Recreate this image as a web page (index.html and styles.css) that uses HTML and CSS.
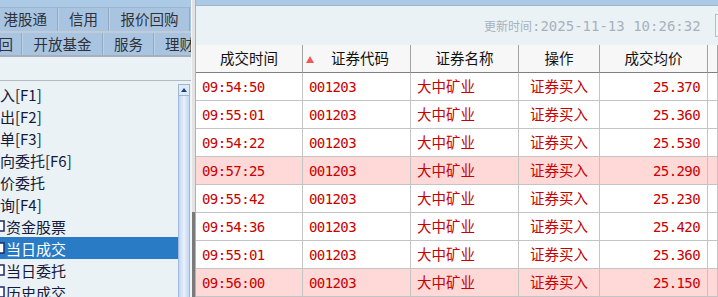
FILE: index.html
```html
<!DOCTYPE html>
<html lang="zh-CN">
<head>
    <meta charset="UTF-8">
    <title>当日成交</title>
    <link rel="stylesheet" href="styles.css">
</head>
<body>

    <!-- 左侧功能树 -->
    <aside class="side">
        <div class="side-band"></div>
        <div class="tabs tabs-top">
            <div class="tab tab-cut">港股通</div>
            <div class="tab">信用</div>
            <div class="tab">报价回购</div>
        </div>
        <div class="tabs tabs-bottom">
            <div class="tab tab-cut">回</div>
            <div class="tab">开放基金</div>
            <div class="tab">服务</div>
            <div class="tab">理财</div>
        </div>
        <div class="side-blank"></div>

        <div class="tree-wrap">
            <ul class="tree">
                <li class="tree-item">入[F1]</li>
                <li class="tree-item">出[F2]</li>
                <li class="tree-item">单[F3]</li>
                <li class="tree-item">向委托[F6]</li>
                <li class="tree-item">价委托</li>
                <li class="tree-item">询[F4]</li>
                <li class="tree-item leaf"><svg class="doc" width="5" height="12" viewBox="0 0 5 12"><rect x="-6" y="1" width="10" height="10" fill="#fff" stroke="#1c2a6b" stroke-width="1.5"/></svg>资金股票</li>
                <li class="tree-item leaf selected"><svg class="doc" width="5" height="12" viewBox="0 0 5 12"><rect x="-6" y="1" width="10" height="10" fill="#fff" stroke="#1c2a6b" stroke-width="1.5"/></svg>当日成交</li>
                <li class="tree-item leaf"><svg class="doc" width="5" height="12" viewBox="0 0 5 12"><rect x="-6" y="1" width="10" height="10" fill="#fff" stroke="#1c2a6b" stroke-width="1.5"/></svg>当日委托</li>
                <li class="tree-item leaf"><svg class="doc" width="5" height="12" viewBox="0 0 5 12"><rect x="-6" y="1" width="10" height="10" fill="#fff" stroke="#1c2a6b" stroke-width="1.5"/></svg>历史成交</li>
            </ul>
            <div class="scrollbar">
                <div class="scroll-up"></div>
                <div class="scroll-track"></div>
            </div>
        </div>
    </aside>

    <div class="splitter">
        <div class="splitter-grip"></div>
    </div>

    <!-- 右侧成交列表 -->
    <main class="main">
        <div class="main-band"></div>
        <div class="status">
            <span class="status-text"><span class="status-label">更新时间</span><span class="mono">:2025-11-13 10:26:32</span></span>
            <div class="status-box"></div>
        </div>

        <table class="grid">
            <colgroup>
                <col class="c-time">
                <col class="c-code">
                <col class="c-name">
                <col class="c-op">
                <col class="c-price">
                <col>
            </colgroup>
            <thead>
                <tr>
                    <th>成交时间</th>
                    <th class="sorted"><span class="sort-mark"></span>证券代码</th>
                    <th>证券名称</th>
                    <th>操作</th>
                    <th>成交均价</th>
                    <th></th>
                </tr>
            </thead>
            <tbody>
                <tr>
                    <td class="mono">09:54:50</td><td class="mono">001203</td><td>大中矿业</td><td class="op">证券买入</td><td class="mono price">25.370</td><td></td>
                </tr>
                <tr>
                    <td class="mono">09:55:01</td><td class="mono">001203</td><td>大中矿业</td><td class="op">证券买入</td><td class="mono price">25.360</td><td></td>
                </tr>
                <tr>
                    <td class="mono">09:54:22</td><td class="mono">001203</td><td>大中矿业</td><td class="op">证券买入</td><td class="mono price">25.530</td><td></td>
                </tr>
                <tr class="hot">
                    <td class="mono">09:57:25</td><td class="mono">001203</td><td>大中矿业</td><td class="op">证券买入</td><td class="mono price">25.290</td><td></td>
                </tr>
                <tr>
                    <td class="mono">09:55:42</td><td class="mono">001203</td><td>大中矿业</td><td class="op">证券买入</td><td class="mono price">25.230</td><td></td>
                </tr>
                <tr>
                    <td class="mono">09:54:36</td><td class="mono">001203</td><td>大中矿业</td><td class="op">证券买入</td><td class="mono price">25.420</td><td></td>
                </tr>
                <tr>
                    <td class="mono">09:55:01</td><td class="mono">001203</td><td>大中矿业</td><td class="op">证券买入</td><td class="mono price">25.360</td><td></td>
                </tr>
                <tr class="hot">
                    <td class="mono">09:56:00</td><td class="mono">001203</td><td>大中矿业</td><td class="op">证券买入</td><td class="mono price">25.150</td><td></td>
                </tr>
            </tbody>
        </table>
    </main>

</body>
</html>
```

FILE: styles.css
```css
* {
    box-sizing: border-box;
}

body {
    margin: 0;
    width: 718px;
    height: 297px;
    overflow: hidden;
    display: flex;
    font-family: "Noto Sans CJK SC", sans-serif;
    background-color: #ebf2f6;
}

.mono {
    font-family: "DejaVu Sans Mono", "Liberation Mono", monospace;
}

/* 左侧 */
.side {
    width: 191px;
    flex-shrink: 0;
    display: flex;
    flex-direction: column;
    overflow: hidden;
    background-color: #ebf2f6;
}

.side-band {
    height: 8px;
    flex-shrink: 0;
    background-color: #acc9e5;
    border-bottom: 1px solid #9cb6d0;
}

.tabs {
    display: grid;
    height: 24px;
    flex-shrink: 0;
    background-color: #a9c4e0;
    border-bottom: 2px solid #c3ccd6;
}

.tabs-top {
    grid-template-columns: 58px 51px 81px;
    height: 25px;
}

.tabs-bottom {
    grid-template-columns: 22px 81px 51px 51px;
    border-bottom-color: #a7b0ba;
}

.tab {
    display: flex;
    align-items: center;
    justify-content: center;
    font-size: 14.5px;
    line-height: 1;
    color: #2e3238;
    white-space: nowrap;
    overflow: hidden;
    border-right: 1px solid #93aac3;
    border-left: 1px solid #bcd0e6;
}

.tab-cut {
    justify-content: flex-end;
    padding-right: 10px;
    border-left: none;
}

.tabs-bottom .tab-cut {
    padding-right: 8px;
}

.side-blank {
    height: 24px;
    flex-shrink: 0;
    border-bottom: 1px solid #b2bac3;
}

.tree-wrap {
    flex: 1;
    min-height: 0;
    display: flex;
}

.tree {
    width: 178px;
    margin: 0;
    padding: 2px 0 0;
    list-style: none;
    overflow: hidden;
}

.tree-item {
    height: 22px;
    display: flex;
    align-items: center;
    font-size: 15px;
    line-height: 1;
    color: #15193a;
    white-space: nowrap;
}

.doc {
    margin-right: 1px;
    flex-shrink: 0;
}

.tree-item.selected {
    background-color: #2a7bc6;
    color: #ffffff;
}

.scrollbar {
    width: 12px;
    margin-top: 3px;
    display: flex;
    flex-direction: column;
}

.scroll-up {
    height: 12px;
    flex-shrink: 0;
    position: relative;
    background-color: #dfeaf7;
    border: 1px solid #9db4d3;
}

.scroll-up::after {
    content: "";
    position: absolute;
    left: 2px;
    top: 3px;
    border-left: 3px solid transparent;
    border-right: 3px solid transparent;
    border-bottom: 4px solid #1f3f86;
}

.scroll-track {
    flex: 1;
    background: linear-gradient(to right, #c3d6f0, #e9f1fb 50%, #c3d6f0);
    border-left: 1px solid #a2badb;
    border-right: 1px solid #a2badb;
}

/* 分隔条 */
.splitter {
    width: 4px;
    flex-shrink: 0;
    display: flex;
    flex-direction: column;
    background-color: #e3e3e3;
    border-left: 1px solid #f7f7f7;
}

.splitter-grip {
    margin-top: 212px;
    flex: 1;
    background-color: #7a7a7a;
}

/* 右侧 */
.main {
    flex: 1;
    display: flex;
    flex-direction: column;
    overflow: hidden;
    border-left: 1px solid #a9b3bd;
}

.main-band {
    height: 6px;
    flex-shrink: 0;
    background-color: #acc9e5;
    border-bottom: 1px solid #9cb6d0;
}

.status {
    height: 39px;
    flex-shrink: 0;
    display: flex;
    align-items: center;
    padding-left: 288px;
    white-space: nowrap;
}

.status-text {
    color: #a8b1bb;
    font-size: 14px;
    line-height: 1;
}

.status-label {
    font-size: 12px;
}

.status-box {
    width: 40px;
    height: 23px;
    margin-left: 14px;
    flex-shrink: 0;
    border: 1px solid #b4bdc6;
    background-color: #f2f6f9;
}

.grid {
    width: 100%;
    flex-shrink: 0;
    table-layout: fixed;
    border-collapse: separate;
    border-spacing: 0;
}

.c-time { width: 107px; }
.c-code { width: 108px; }
.c-name { width: 108px; }
.c-op { width: 81px; }
.c-price { width: 108px; }

.grid th {
    height: 28px;
    padding: 0;
    font-size: 14.5px;
    font-weight: normal;
    line-height: 1;
    color: #111111;
    background-color: #f7f7f7;
    border-right: 1px solid #a3a3a3;
    border-bottom: 1px solid #808080;
    white-space: nowrap;
}

.grid th.sorted {
    position: relative;
    padding-left: 7px;
}

.sort-mark {
    position: absolute;
    left: 3px;
    top: 11px;
    border-left: 4px solid transparent;
    border-right: 4px solid transparent;
    border-bottom: 7px solid #f25757;
}

.grid td {
    height: 28px;
    padding: 0 6px;
    font-size: 14.5px;
    line-height: 1;
    color: #c80000;
    background-color: #ffffff;
    border-right: 1px solid #c4c4c4;
    border-bottom: 1px solid #c4c4c4;
    white-space: nowrap;
    overflow: hidden;
}

.grid td.mono {
    font-size: 14px;
    letter-spacing: -0.6px;
}

.grid td.op {
    text-align: center;
}

.grid td.price {
    text-align: right;
    padding-right: 7px;
}

.grid tr.hot td {
    background-color: #ffd8d8;
}
```
